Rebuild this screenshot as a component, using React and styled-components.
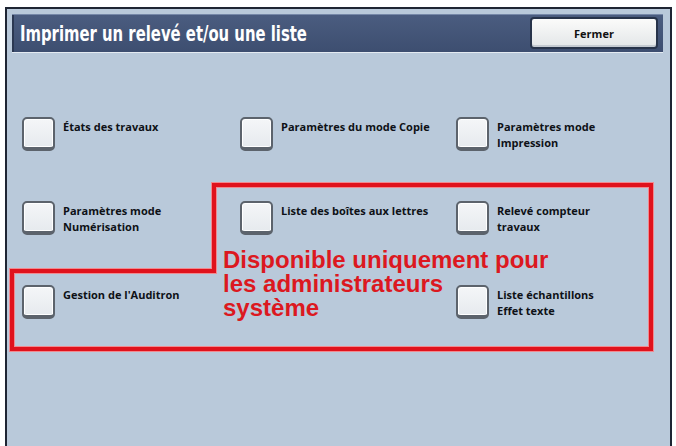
import styled, { createGlobalStyle } from 'styled-components';

const GlobalStyle = createGlobalStyle`
  html, body {
    margin: 0;
    padding: 0;
    background: #ffffff;
  }
`;

const Screen = styled.div`
  position: relative;
  box-sizing: border-box;
  margin: 7px 0 0 5px;
  width: 667px;
  height: 439px;
  border: 2px solid #1e2533;
  border-bottom: none;
  background: #b9c9da;
  padding: 5px 7px 0 5px;
  font-family: 'Open Sans', 'DejaVu Sans', sans-serif;
`;

const Header = styled.div`
  display: flex;
  align-items: center;
  justify-content: space-between;
  height: 38px;
  padding: 0 5px 0 8px;
  background: linear-gradient(#4b5d80, #3d4e70);
  box-shadow: inset 0 1px 0 #7688a8, inset 2px 0 0 #2b3852, 0 1px 0 #e4ebf2;
`;

const Title = styled.h1`
  margin: 0;
  color: #ffffff;
  font-family: 'DejaVu Sans Condensed', sans-serif;
  font-weight: 700;
  font-size: 22px;
  white-space: nowrap;
  transform: scaleX(0.75);
  transform-origin: left center;
`;

const CloseButton = styled.button`
  width: 128px;
  height: 32px;
  border: 2px solid #27334a;
  border-radius: 4px;
  background: linear-gradient(#fbfbfa, #e3e6e8);
  box-shadow: inset 0 -2px 0 #c4cad1;
  font-family: 'Open Sans', 'DejaVu Sans', sans-serif;
  font-weight: 700;
  font-size: 11px;
  color: #111;
  padding: 0;
`;

const Body = styled.div`
  position: relative;
  height: 380px;
`;

const Grid = styled.div`
  display: grid;
  grid-template-columns: 218px 216px 200px;
  row-gap: 50px;
  padding: 65px 0 0 10px;
`;

const Item = styled.div`
  display: flex;
  align-items: flex-start;
  gap: 8px;
  height: 34px;
`;

const Box = styled.div`
  flex: none;
  box-sizing: border-box;
  width: 33px;
  height: 34px;
  border: 2px solid #5c636c;
  border-bottom-width: 4px;
  border-radius: 5px;
  background: linear-gradient(#f4f6f8, #e6eaee);
  box-shadow: inset 0 0 0 1px #ffffff;
`;

const Label = styled.div`
  padding-top: 2px;
  font-size: 11px;
  font-weight: 700;
  line-height: 16px;
  color: #0e1116;
`;

const Outline = styled.svg`
  position: absolute;
  left: -12px;
  top: -52px;
  pointer-events: none;
`;

const Note = styled.div`
  position: absolute;
  left: 211px;
  top: 196px;
  font-family: 'Liberation Sans', Arial, sans-serif;
  font-weight: 700;
  font-size: 24px;
  line-height: 24px;
  color: #dc1820;
`;

const items = [
  ['États des travaux'],
  ['Paramètres du mode Copie'],
  ['Paramètres mode', 'Impression'],
  ['Paramètres mode', 'Numérisation'],
  ['Liste des boîtes aux lettres'],
  ['Relevé compteur', 'travaux'],
  ["Gestion de l'Auditron"],
  null,
  ['Liste échantillons', 'Effet texte'],
];

const App = () => (
  <>
    <GlobalStyle />
    <Screen>
      <Header>
        <Title>Imprimer un relevé et/ou une liste</Title>
        <CloseButton>Fermer</CloseButton>
      </Header>
      <Body>
        <Grid>
          {items.map((lines, i) =>
            lines ? (
              <Item key={i}>
                <Box />
                <Label>
                  {lines.map((l, j) => (
                    <div key={j}>{l}</div>
                  ))}
                </Label>
              </Item>
            ) : (
              <div key={i} />
            )
          )}
        </Grid>
        <Outline width="676" height="446" viewBox="0 0 676 446">
          <path
            d="M214 185 H651 V349 H12 V271 H214 Z"
            fill="none"
            stroke="#f08a90"
            strokeWidth="6"
          />
          <path
            d="M214 185 H651 V349 H12 V271 H214 Z"
            fill="none"
            stroke="#e0121c"
            strokeWidth="4"
          />
        </Outline>
        <Note>
          Disponible uniquement pour
          <br />
          les administrateurs
          <br />
          système
        </Note>
      </Body>
    </Screen>
  </>
);

export default App;
